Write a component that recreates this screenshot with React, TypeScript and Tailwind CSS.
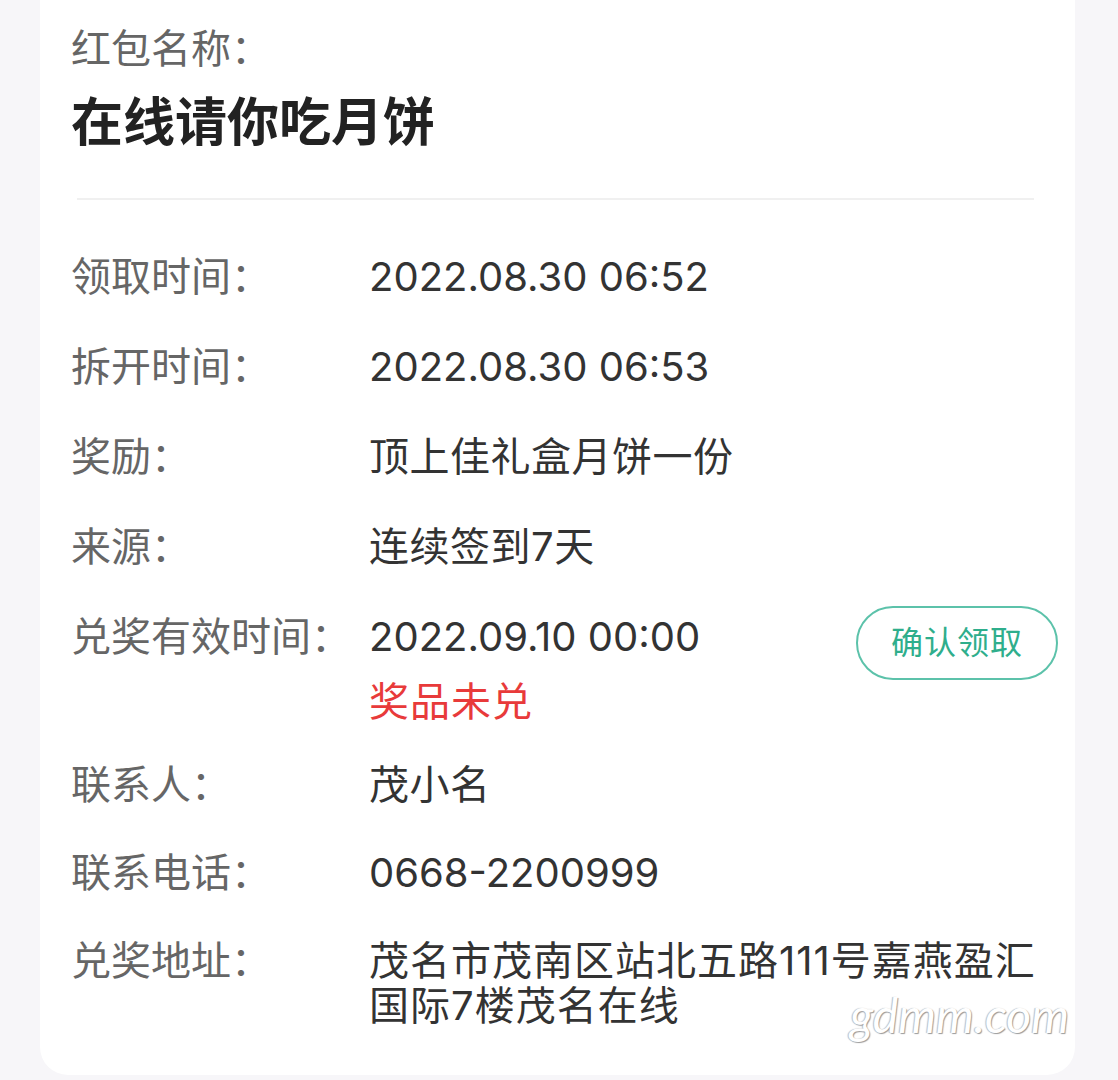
import React from "react";

const rows = [
  { label: "领取时间：", value: "2022.08.30 06:52", cjk: false },
  { label: "拆开时间：", value: "2022.08.30 06:53", cjk: false },
  { label: "奖励：", value: "顶上佳礼盒月饼一份", cjk: true },
  { label: "来源：", value: "连续签到7天", cjk: true },
];

const contact = [
  { label: "联系人：", value: "茂小名", cjk: true },
  { label: "联系电话：", value: "0668-2200999", cjk: false },
];

const Row = ({ label, children }: { label: string; children: React.ReactNode }) => (
  <div className="flex items-start">
    <div className="w-[298px] shrink-0 text-[40px] leading-[46px] text-[#666]">{label}</div>
    <div className="flex-1 min-w-0">{children}</div>
  </div>
);

export default function App() {
  return (
    <div
      className="min-h-[1080px] w-full bg-[#f7f6f9] overflow-hidden"
      style={{ fontFamily: 'Inter, "Noto Sans CJK SC", sans-serif' }}
    >
      <div className="relative ml-[40px] w-[1035px] h-[1075px] bg-white rounded-b-[28px] pl-[31px] pr-[17px] pt-[26px]">
        <div className="text-[40px] leading-[46px] text-[#666]">红包名称：</div>
        <div className="mt-[20px] text-[52px] leading-[62px] font-bold text-[#222]">在线请你吃月饼</div>
        <div className="ml-[6px] mr-[24px] mt-[44px] h-[2px] bg-[#f0f0f0]" />

        <div className="mt-[54px] flex flex-col gap-[44px] text-[#333]">
          {rows.map((r) => (
            <Row key={r.label} label={r.label}>
              <div className={r.cjk ? "text-[40px] leading-[46px] tracking-[0.5px]" : "text-[40px] leading-[46px]"}>{r.value}</div>
            </Row>
          ))}

          <Row label="兑奖有效时间：">
            <div className="flex items-start justify-between -mb-[7px]">
              <div>
                <div className="text-[40px] leading-[46px]">2022.09.10 00:00</div>
                <div className="mt-[19px] text-[40px] leading-[46px] text-[#e83a3a] tracking-[1px]">奖品未兑</div>
              </div>
              <button className="-mt-[8px] w-[202px] h-[74px] rounded-full border-2 border-[#5cc2aa] text-[32px] text-[#2fae8c] tracking-[1px]">
                确认领取
              </button>
            </div>
          </Row>
        </div>

        <div className="mt-[44px] flex flex-col gap-[42px] text-[#333]">
          {contact.map((r) => (
            <Row key={r.label} label={r.label}>
              <div className={r.cjk ? "text-[40px] leading-[46px] tracking-[0.5px]" : "text-[40px] leading-[46px]"}>{r.value}</div>
            </Row>
          ))}

          <Row label="兑奖地址：">
            <div className="text-[40px] leading-[45px] tracking-[1px]">茂名市茂南区站北五路111号嘉燕盈汇国际7楼茂名在线</div>
          </Row>
        </div>

        <div
          className="absolute right-[6px] bottom-[36px] text-[48px] leading-none italic text-white [text-shadow:1px_1px_1px_#999,-1px_0_1px_#bbb]"
          style={{ fontFamily: 'Lato, sans-serif' }}
        >
          gdmm.com
        </div>
      </div>
    </div>
  );
}
